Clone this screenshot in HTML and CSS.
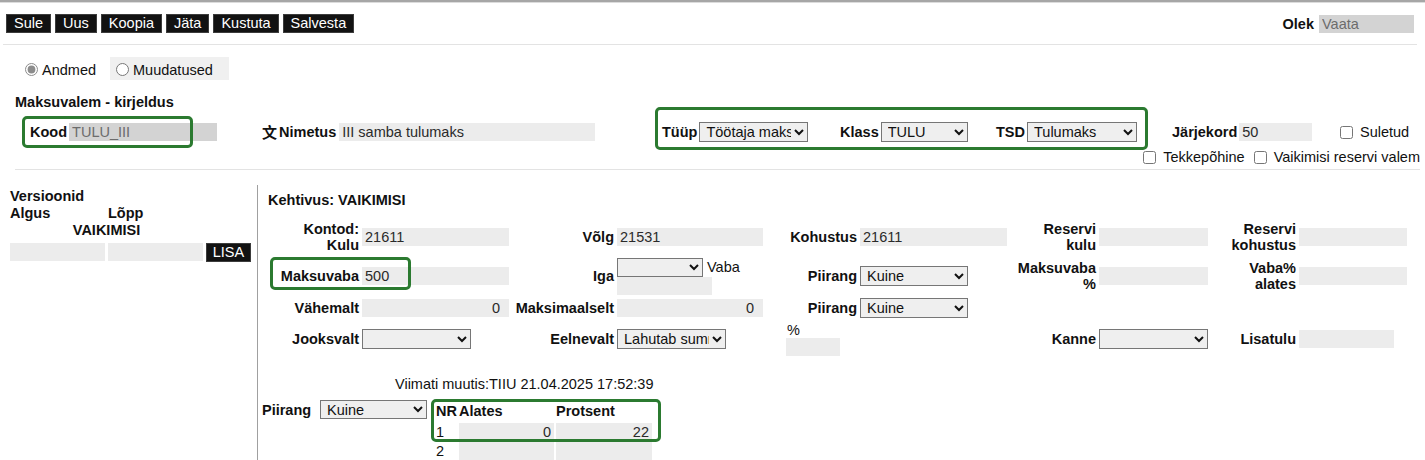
FILE: index.html
```html
<!DOCTYPE html>
<html lang="et">
<head>
  <meta charset="UTF-8" />
  <title>Maksuvalem</title>
  <link rel="stylesheet" href="styles.css">
</head>
<body>
<div class="page">

  <div class="topbar">
    <div class="actions">
      <button class="btn">Sule</button>
      <button class="btn">Uus</button>
      <button class="btn">Koopia</button>
      <button class="btn">Jäta</button>
      <button class="btn">Kustuta</button>
      <button class="btn">Salvesta</button>
    </div>
    <div class="olek">
      <b>Olek</b>
      <input class="fld locked olek-val" value="Vaata" readonly>
    </div>
  </div>

  <div class="sep sep-top"></div>

  <div class="tabs">
    <label class="tab"><input type="radio" name="tab" class="radio-on" checked> Andmed</label>
    <label class="tab tab-alt"><input type="radio" name="tab"> Muudatused</label>
  </div>

  <h3 class="section">Maksuvalem - kirjeldus</h3>

  <div class="head-row">
    <div class="grp"><b>Kood</b><input class="fld locked kood" value="TULU_III" readonly></div>
    <div class="grp"><span class="lang">文</span><b>Nimetus</b><input class="fld nimetus" value="III samba tulumaks"></div>
    <div class="grp"><b>Tüüp</b><select class="sel-tyyp"><option>Töötaja maks</option></select></div>
    <div class="grp"><b>Klass</b><select class="sel-klass"><option>TULU</option></select></div>
    <div class="grp"><b>TSD</b><select class="sel-tsd"><option>Tulumaks</option></select></div>
    <div class="grp"><b>Järjekord</b><input class="fld jrk" value="50"></div>
    <div class="grp"><label class="chk"><input type="checkbox"> Suletud</label></div>

    <div class="mark mark-kood"></div>
    <div class="mark mark-tyyp"></div>
  </div>

  <div class="check-row">
    <label class="chk"><input type="checkbox"> Tekkepõhine</label>
    <label class="chk"><input type="checkbox"> Vaikimisi reservi valem</label>
  </div>

  <div class="sep sep-head"></div>

  <div class="main">
    <div class="versions">
      <b class="full">Versioonid</b>
      <b class="col1">Algus</b>
      <b class="col2">Lõpp</b>
      <b class="span2 center">VAIKIMISI</b>
      <input class="fld w95 r4">
      <input class="fld w95 r4">
      <button class="btn lisa r4">LISA</button>
    </div>

    <div class="details">
      <h4 class="kehtivus">Kehtivus: VAIKIMISI</h4>

      <div class="form">
        <!-- rida 1 -->
        <div class="lab">Kontod:<br>Kulu</div>
        <div><input class="fld w147" value="21611"></div>
        <div class="lab">Võlg</div>
        <div><input class="fld w146" value="21531"></div>
        <div class="lab">Kohustus</div>
        <div><input class="fld w147" value="21611"></div>
        <div class="lab">Reservi<br>kulu</div>
        <div><input class="fld w109"></div>
        <div class="lab">Reservi<br>kohustus</div>
        <div><input class="fld w108"></div>

        <!-- rida 2 -->
        <div class="lab">Maksuvaba</div>
        <div><input class="fld w147" value="500"></div>
        <div class="lab">Iga</div>
        <div class="stack">
          <div class="inline"><select class="sel-iga"><option></option></select><span class="vaba">Vaba</span></div>
          <input class="fld w95">
        </div>
        <div class="lab">Piirang</div>
        <div><select class="sel-108"><option>Kuine</option></select></div>
        <div class="lab">Maksuvaba<br>%</div>
        <div><input class="fld w109"></div>
        <div class="lab">Vaba%<br>alates</div>
        <div><input class="fld w108"></div>

        <!-- rida 3 -->
        <div class="lab">Vähemalt</div>
        <div><input class="fld w147 num" value="0"></div>
        <div class="lab">Maksimaalselt</div>
        <div><input class="fld w146 num" value="0"></div>
        <div class="lab">Piirang</div>
        <div><select class="sel-108"><option>Kuine</option></select></div>
        <div></div><div></div><div></div><div></div>

        <!-- rida 4 -->
        <div class="lab">Jooksvalt</div>
        <div><select class="sel-109"><option></option></select></div>
        <div class="lab">Eelnevalt</div>
        <div><select class="sel-109"><option>Lahutab summa</option></select></div>
        <div class="stack pct">
          <span class="pct-lab">%</span>
          <input class="fld w54">
        </div>
        <div></div>
        <div class="lab">Kanne</div>
        <div><select class="sel-109"><option></option></select></div>
        <div class="lab">Lisatulu</div>
        <div><input class="fld w95"></div>

        <div class="mark mark-vaba"></div>
      </div>

      <div class="muutis">Viimati muutis:TIIU 21.04.2025 17:52:39</div>

      <div class="bottom">
        <b class="piirang-lab">Piirang</b>
        <select class="sel-107"><option>Kuine</option></select>
        <div class="steps">
          <b class="nr">NR</b><b>Alates</b><b>Protsent</b>
          <span class="nr">1</span><input class="fld w95 num-t" value="0"><input class="fld w96 num-t" value="22">
          <span class="nr">2</span><input class="fld w95 num-t"><input class="fld w96 num-t">
          <div class="mark mark-steps"></div>
        </div>
      </div>
    </div>
  </div>

</div>
</body>
</html>
```

FILE: styles.css
```css
body {
  margin: 0;
  font-family: "Liberation Sans", Arial, sans-serif;
  font-size: 14.5px;
  color: #111;
  background: #fff;
}
.page {
  border-top: 2px solid #a6a6a6;
  box-shadow: inset 0 1px 0 #dcdcdc;
  height: 458px;
  overflow: hidden;
}
b {
  font-weight: bold;
}

/* nupud */
.topbar {
  display: flex;
  justify-content: space-between;
  align-items: center;
  padding: 12px 11px 0 6px;
}
.actions {
  display: flex;
  gap: 4px;
}
.btn {
  background: #121212;
  color: #fff;
  border: 1px solid #3c3c3c;
  font: inherit;
  height: 19px;
  line-height: 17px;
  padding: 0 7px;
  border-radius: 0;
  cursor: pointer;
}
.olek {
  display: flex;
  align-items: center;
  gap: 5px;
}
.olek-val {
  width: 95px;
}

.sep {
  height: 1px;
  background: #e3e3e3;
}
.sep-top {
  margin: 11px 8px 0 3px;
}
.sep-head {
  margin: 4px 5px 0 15px;
}

/* sakid */
.tabs {
  display: flex;
  gap: 8px;
  margin-top: 12px;
  padding-left: 19px;
}
.tab {
  display: flex;
  align-items: center;
  gap: 4px;
  height: 23px;
  padding: 2px 6px 0 6px;
  box-sizing: border-box;
}
.tab-alt {
  background: #f0f0f0;
  padding-right: 16px;
}
.tab input {
  margin: 0;
  width: 13px;
  height: 13px;
}
.radio-on {
  accent-color: #8c8c8c;
}

.section {
  margin: 14px 0 0 15px;
  font-size: 14.5px;
  line-height: 16px;
}

/* väljad */
input.fld {
  height: 18px;
  border: 0;
  background: #ececec;
  font: inherit;
  color: #2a2a2a;
  padding: 0 3px;
  box-sizing: border-box;
  outline: none;
  vertical-align: middle;
}
input.locked {
  background: #d3d3d3;
  color: #6c6c6c;
}
input.num {
  text-align: right;
  padding-right: 9px;
}
input.num-t {
  text-align: right;
  padding-right: 3px;
}
select {
  height: 20px;
  font: inherit;
  color: #111;
  background-color: #efefef;
  border: 1px solid #767676;
  border-radius: 0;
  padding: 0 0 0 2px;
  box-sizing: border-box;
}
.w54 { width: 54px; }
.w95 { width: 95px; }
.w96 { width: 96px; }
.w108 { width: 108px; }
.w109 { width: 109px; }
.w146 { width: 146px; }
.w147 { width: 147px; }

/* päis */
.head-row {
  position: relative;
  display: grid;
  grid-template-columns: 232px 400px 178px 156px 176px 165px auto;
  align-items: center;
  height: 20px;
  margin-top: 12px;
  padding-left: 30px;
}
.grp {
  display: flex;
  align-items: center;
}
.grp input.fld,
.grp select {
  margin-left: 2px;
}
.kood { width: 148px; }
.nimetus { width: 256px; margin-left: 3px !important; }
.jrk { width: 73px; }
.sel-tyyp { width: 109px; }
.sel-klass { width: 87px; }
.sel-tsd { width: 110px; }
.lang {
  font-family: "Noto Sans CJK SC", sans-serif;
  font-weight: bold;
  font-size: 15px;
  line-height: 16px;
  margin-right: 2px;
}
.chk {
  display: flex;
  align-items: center;
}
.chk input {
  margin: 0 7px 0 0;
  width: 13px;
  height: 13px;
}
.head-row .chk {
  margin-left: 3px;
}
.check-row {
  display: flex;
  justify-content: flex-end;
  gap: 9px;
  height: 16px;
  margin-top: 7px;
  padding-right: 5px;
}

/* rohelised märgised */
.mark {
  position: absolute;
  border: 3px solid #2b7a30;
  border-radius: 5px;
  box-sizing: border-box;
  pointer-events: none;
}
.mark-kood { left: 22px; top: -6px; width: 171px; height: 32px; }
.mark-tyyp { left: 655px; top: -15px; width: 493px; height: 43px; }
.mark-vaba { left: 12px; top: 37px; width: 141px; height: 33px; }
.mark-steps { left: -2px; top: -1px; width: 230px; height: 43px; }

/* põhiosa */
.main {
  display: flex;
  margin-top: 15px;
  height: 275px;
}
.versions {
  width: 247px;
  border-right: 1px solid #a0a0a0;
  padding: 2px 0 0 10px;
  display: grid;
  grid-template-columns: 95px 95px 45px;
  grid-template-rows: 17px 17px 17px 23px;
  column-gap: 3px;
  align-content: start;
  align-items: center;
}
.full {
  grid-column: 1 / -1;
}
.col1 {
  grid-column: 1;
}
.col2 {
  grid-column: 2;
}
.span2 {
  grid-column: 1 / 3;
}
.center {
  text-align: center;
}
.r4 {
  grid-row: 4;
  align-self: end;
}
.lisa {
  padding: 0;
  margin-bottom: -1px;
}

.details {
  flex: 1;
  position: relative;
}
.kehtivus {
  margin: 7px 0 0 10px;
  font-size: 14.5px;
  line-height: 16px;
}
.form {
  position: relative;
  display: grid;
  grid-template-columns: 104px 151px 104px 150px 93px 148px 91px 109px 91px 111px;
  grid-template-rows: 34px 38px 20px 36px;
  row-gap: 3px;
  align-items: center;
  margin-top: 12px;
}
.lab {
  font-weight: bold;
  text-align: right;
  padding-right: 3px;
  line-height: 16px;
}
.stack {
  display: flex;
  flex-direction: column;
  align-items: flex-start;
}
.inline {
  display: flex;
  align-items: center;
}
.sel-iga { width: 86px; height: 19px; }
.vaba {
  margin-left: 4px;
}
.sel-107 { width: 107px; height: 19px; }
.sel-108 { width: 108px; }
.sel-109 { width: 109px; }
.pct {
  padding-left: 19px;
}
.pct-lab {
  line-height: 16px;
  padding-left: 1px;
}

.muutis {
  margin: 19px 0 0 137px;
  line-height: 16px;
}
.bottom {
  display: flex;
  align-items: flex-start;
  margin-top: 8px;
}
.piirang-lab {
  width: 58px;
  padding-left: 4px;
  line-height: 20px;
}
.steps {
  position: relative;
  margin-left: 6px;
  display: grid;
  grid-template-columns: 26px 97px 96px;
  grid-template-rows: 22px 18px 18px;
  row-gap: 1px;
  align-items: center;
}
.nr {
  padding-left: 3px;
}
```
